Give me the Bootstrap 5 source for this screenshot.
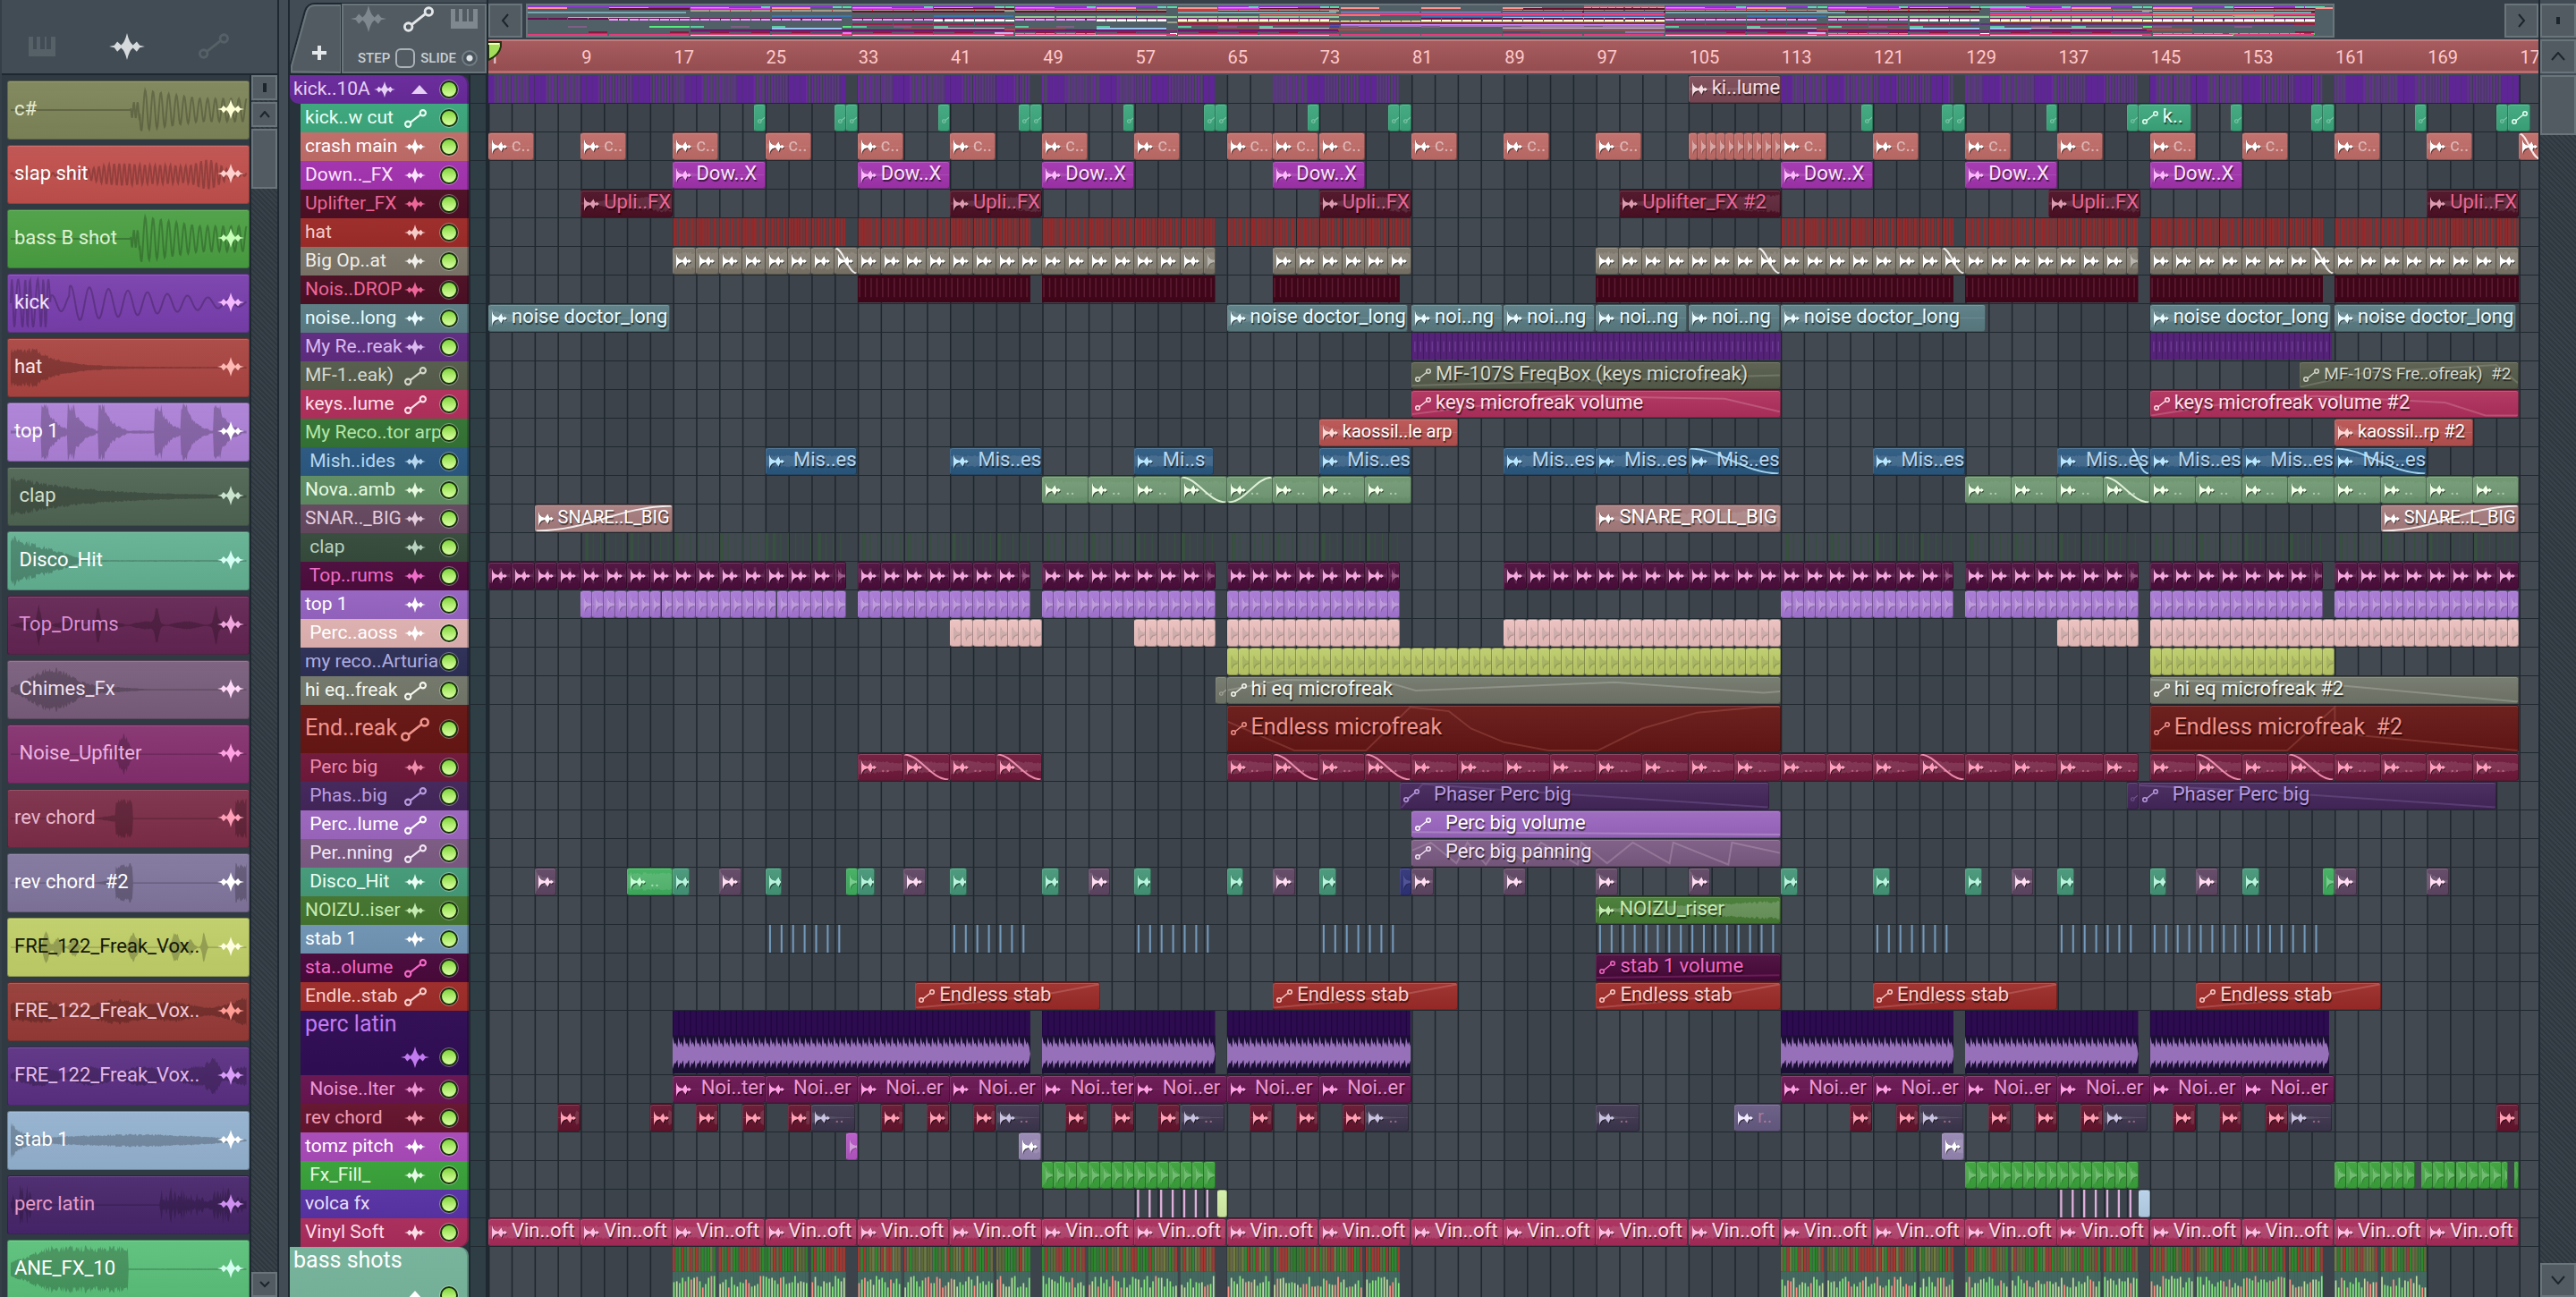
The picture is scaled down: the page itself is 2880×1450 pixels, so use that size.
<!DOCTYPE html>
<html lang="en">
<head>
<meta charset="utf-8">
<meta name="viewport" content="width=device-width, initial-scale=1">
<title>Playlist</title>
<link href="https://cdn.jsdelivr.net/npm/bootstrap@5.3.0/dist/css/bootstrap.min.css" rel="stylesheet">
<style>
  :root { --edge:#1d2830; --slate:#424c54; --panel:#525b62; --rim:#69747b; --well:#2f3a43; }
  body { background:var(--slate); font-family:Roboto,"Open Sans",sans-serif; font-size:22px; line-height:30px; color:#fff; }
  button { font:inherit; color:inherit; background:none; border:0; padding:0; }
  svg { display:block; flex:none; }
  .hatch { background:repeating-linear-gradient(45deg,#30383f 0 2px,#384149 2px 4px); }
  .raised { background:var(--panel); border:2px solid var(--rim); color:#1c252c; }
  .cap-s { height:28px; }
  .cap-m { height:38px; }
  .thumb { height:67px; }

  /* picker */
  .picker { width:312px; border-left:2px solid #353f47; border-right:2px solid var(--edge); }
  .picker-tabs { height:84px; padding:22px 54px 0 30px; border-bottom:2px solid var(--edge); }
  .picker-list { width:279px; background:var(--well); padding:6px 0 0 6px; gap:6px; border-right:2px solid var(--edge); }
  .picker-item { height:66px; flex:none; border-radius:3px; padding:0 5px 2px 7px; border:1px solid rgba(0,0,0,.25); box-shadow:inset 0 1px rgba(255,255,255,.14); background-image:linear-gradient(rgba(255,255,255,.05),rgba(0,0,0,.04)); white-space:pre; overflow:hidden; text-align:left; }
  .picker-item .wv { left:3px; right:3px; top:1px; bottom:1px; }
  .vbar { gap:2px; }
  .vbar.slim { width:29px; }
  .vbar.wide { width:42px; border-left:2px solid var(--edge); }
  .wv { position:absolute; overflow:visible; }

  /* top strip */
  .gap-col { width:10px; }
  .playlist { border-left:2px solid var(--edge); }
  .top-strip { height:84px; }
  .corner { width:222px; border-right:2px solid var(--edge); border-bottom:2px solid var(--edge); }
  .add-tab { width:58px; height:82px; }
  .tool-box { width:162px; margin-top:4px; border:2px solid var(--rim); outline:1px solid var(--edge); background:var(--panel); }
  .tool-box label { font-size:15px; font-weight:500; line-height:20px; color:#c9d0d4; }
  .tool-box input { appearance:none; margin:0; border:2px solid #aab2b7; width:22px; height:22px; border-radius:6px; }
  .tool-box input[type=radio] { width:18px; height:18px; border-radius:50%; border-color:#737d84; background:radial-gradient(#dfe4e6 0 3px,#4a545c 4px); }
  .overview-row { height:44px; background:#363f47; padding:4px 0 2px; }
  .nav-btn { width:38px; }
  .overview { width:91.4%; background:#516067; border:2px solid var(--rim); }
  .ruler { height:38px; background:linear-gradient(#a75c5e,#944d50); border-top:2px solid #c27b7d; border-bottom:3px solid #b96d70; }
  .ruler span { position:absolute; top:3px; padding-left:1px; font-size:20px; color:#ffc9ca; }
  .ruler svg { position:absolute; left:0; top:0; z-index:2; }

  /* tracks */
  .heads { width:200px; padding-left:12px; background:#27323a; }
  .head { height:32px; padding:0 12px 0 5px; font-size:21px; white-space:pre; box-shadow:inset -2px 0 rgba(0,0,0,.2); background-image:linear-gradient(rgba(255,255,255,.02),rgba(0,0,0,.03)); }
  .head.grp { margin-left:-12px; padding-left:4px; border-radius:0 10px 0 0; }
  .head.grp:first-child { border-bottom-left-radius:10px; }
  .head.last { border-radius:0 0 10px 0; }
  .head.tall { height:54px; font-size:25px; }
  .head.lofty { height:72px; font-size:25px; }
  .head span { min-width:0; padding-bottom:3px; }
  .head .ico { width:34px; margin-right:11px; flex:none; }
  .head .w0 { margin-right:18px; }
  .head .t0 { margin-right:14px; }
  .led { appearance:none; width:20px; height:20px; margin:0; border-radius:50%; border:2px solid #16300c; outline:1px solid rgba(255,255,255,.35); background:linear-gradient(#7fd33c,#b9f07a 60%,#d9ffa4); flex:none; }
  .gutter { width:22px; border-left:2px solid #1d2830; border-right:3px solid #1d2830; background:#2f3d45; }
  .gutter div, .lane { height:32px; border-bottom:1px solid #20282f; }
  .gutter .tall, .lane.tall { height:54px; }
  .gutter .lofty, .lane.lofty { height:72px; }
  .lanes { background:#424951; overflow:hidden; }
  .grid-lines { position:absolute; left:0; top:0; width:100%; height:100%; }
  .lane { position:relative; }
  .clip { position:absolute; top:0; bottom:0; display:flex; align-items:center; border-radius:3px; overflow:hidden; white-space:pre; padding-left:3px; border:1px solid rgba(0,0,0,.28); border-left-color:rgba(255,255,255,.08); box-shadow:inset 0 1px rgba(255,255,255,.16); background-image:linear-gradient(rgba(255,255,255,.05),rgba(0,0,0,.06)); text-shadow:1px 2px 1px rgba(0,0,0,.6); }
  .clip > svg, .clip > span { position:relative; }
  .clip > .wv { position:absolute; left:0; top:0; width:100%; height:100%; }
  .clip span { padding:0 0 3px 5px; }
  .clip .dim { opacity:.5; text-shadow:none; font-size:20px; }
  .clip .snug { font-size:20px; }
  .clip .snugger { font-size:19px; }
  .clip .faint { opacity:.4; }
  .tall .clip { font-size:25px; }
  .strip { position:absolute; top:0; height:100%; overflow:hidden; }
</style>
</head>
<body class="vh-100 d-flex overflow-hidden">

<aside class="picker d-flex flex-column flex-shrink-0">
  <div class="picker-tabs d-flex justify-content-between" id="pickerTabs"></div>
  <div class="d-flex flex-grow-1 overflow-hidden">
    <div class="picker-list d-flex flex-column overflow-hidden" id="picker"></div>
    <div class="vbar slim d-flex flex-column hatch">
      <button class="raised cap-s d-flex justify-content-center align-items-center" aria-label="Pin"><svg width="4" height="10"><rect width="4" height="10" fill="#1c252c"/></svg></button>
      <button class="raised cap-s d-flex justify-content-center align-items-center" aria-label="Up"><svg width="12" height="8"><path d="M1 7 6 1 11 7" fill="none" stroke="#1c252c" stroke-width="2"/></svg></button>
      <div class="raised thumb"></div>
      <button class="raised cap-s mt-auto d-flex justify-content-center align-items-center" aria-label="Down"><svg width="12" height="8"><path d="M1 1 6 6 11 1" fill="none" stroke="#1c252c" stroke-width="2"/></svg></button>
    </div>
  </div>
</aside>
<div class="gap-col flex-shrink-0"></div>

<main class="playlist d-flex flex-column flex-grow-1 overflow-hidden">
  <div class="top-strip d-flex flex-shrink-0">
    <div class="corner d-flex flex-shrink-0">
      <button class="add-tab" aria-label="Add track">
        <svg width="58" height="82"><path d="M0 84 L0 74 L17 12 Q20 4 28 4 L58 4 L58 84Z" fill="#525b62" stroke="#1d2830" stroke-width="2"/><path d="M2 80 L2 74 L19 13 Q21 6 28 6 L57 6 L57 81Z" fill="none" stroke="#69747b" stroke-width="2"/><path d="M25 59 H41 M33 51 V67" stroke="#e3e7e9" stroke-width="4"/></svg>
      </button>
      <div class="tool-box d-flex flex-column justify-content-between px-2 pb-1">
        <div class="d-flex justify-content-between align-items-center" id="toolIcons"></div>
        <div class="d-flex align-items-center justify-content-between ps-2">
          <label for="step">STEP</label><input type="checkbox" id="step">
          <label for="slide">SLIDE</label><input type="radio" id="slide" checked>
        </div>
      </div>
    </div>
    <div class="flex-grow-1 d-flex flex-column">
      <div class="overview-row d-flex">
        <button class="nav-btn raised d-flex justify-content-center align-items-center" aria-label="Back"><svg width="10" height="16"><path d="M8 1 2 8 8 15" fill="none" stroke="#1c252c" stroke-width="2"/></svg></button>
        <div class="flex-grow-1 ps-1"><div class="overview h-100"><svg id="overview" width="100%" height="100%" shape-rendering="crispEdges"></svg></div></div>
        <button class="nav-btn raised d-flex justify-content-center align-items-center" aria-label="Forward"><svg width="10" height="16"><path d="M2 1 8 8 2 15" fill="none" stroke="#1c252c" stroke-width="2"/></svg></button>
      </div>
      <div class="ruler position-relative overflow-hidden" id="ruler">
        <svg width="16" height="22"><path d="M0 1 H14 V6 Q12 16 0 21Z" fill="#a4dc5c" stroke="#24330f" stroke-width="2"/><path d="M0 3 H12" stroke="#f4ffb0" stroke-width="2"/></svg>
      </div>
    </div>
    <div class="vbar wide d-flex flex-column pt-1">
      <button class="raised cap-m d-flex justify-content-center align-items-center" aria-label="Pin"><svg width="4" height="8"><rect width="4" height="8" fill="#1c252c"/></svg></button>
      <button class="raised cap-m d-flex justify-content-center align-items-center" aria-label="Up"><svg width="16" height="10"><path d="M1 9 8 1 15 9" fill="none" stroke="#1c252c" stroke-width="2"/></svg></button>
    </div>
  </div>
  <div class="d-flex flex-grow-1 overflow-hidden">
    <div class="heads flex-shrink-0" id="heads"></div>
    <div class="gutter flex-shrink-0" id="gutter"></div>
    <div class="lanes position-relative flex-grow-1" id="lanes"></div>
    <div class="vbar wide d-flex flex-column flex-shrink-0 hatch">
      <div class="raised thumb"></div>
      <button class="raised cap-m mt-auto d-flex justify-content-center align-items-center" aria-label="Down"><svg width="16" height="10"><path d="M1 1 8 9 15 1" fill="none" stroke="#1c252c" stroke-width="2"/></svg></button>
    </div>
  </div>
</main>

<script src="https://cdn.jsdelivr.net/npm/bootstrap@5.3.0/dist/js/bootstrap.bundle.min.js"></script>
<script>
const BARS = 177.67;                       // bars visible across the lanes
const pct = n => (n / BARS * 100).toFixed(4) + '%';
let seed = 7;
const rnd = () => (seed = (seed * 16807) % 2147483647) / 2147483647;

/* icons */
const WAVE = 'M0 8 3.5 7.3 5.5 5 8 7.2Q10.6 5.5 12 0Q13.4 5.5 16 7.2L18.5 5 20.5 7.3 24 8 20.5 8.7 18.5 11 16 8.8Q13.4 10.5 12 16Q10.6 10.5 8 8.8L5.5 11 3.5 8.7Z';
const wave = (w, c) => `<svg width="${w}" height="${Math.round(w * .74)}" viewBox="0 0 24 16" preserveAspectRatio="none"><path fill="${c}" d="${WAVE}"/></svg>`;
const link = (w, c) => `<svg width="${w}" height="${Math.round(w * .84)}" viewBox="0 0 24 20" fill="none" stroke="${c}" stroke-width="2"><circle cx="4" cy="16" r="3"/><circle cx="20" cy="4" r="3"/><path d="M7 14 17 6"/></svg>`;
const keys = (w, c) => `<svg width="${w}" height="22" viewBox="0 0 30 22"><path fill="${c}" d="M0 0H5V14H9V0H10V0H13V14H18V0H20V14H25V0H30V22H0Z"/></svg>`;
const burst = (c, cls) => `<svg class="${cls}" width="17" height="18" viewBox="0 0 17 18"><path fill="rgba(0,0,0,.5)" transform="translate(1 1)" d="M0 1Q2 7 5 7.2L7 8 10.5 3.5 12.5 8 14.5 7 17 9 14.5 11 12.5 10 10.5 14.5 7 10 5 10.8Q2 11 0 17Z"/><path fill="${c}" d="M0 1Q2 7 5 7.2L7 8 10.5 3.5 12.5 8 14.5 7 17 9 14.5 11 12.5 10 10.5 14.5 7 10 5 10.8Q2 11 0 17Z"/></svg>`;

/* waveform shapes: f(t) gives the half height, 0..1 */
function solid(f, n, fill) {
  let up = '', dn = '';
  for (let i = 0; i <= n; i++) {
    const a = Math.max(.02, f(i / n) * (.7 + .3 * rnd()));
    up += `L${i} ${(50 - a * 48).toFixed(1)}`; dn = `L${i} ${(50 + a * 48).toFixed(1)}` + dn;
  }
  return `<svg class="wv" width="98%" height="97%" viewBox="0 0 ${n} 100" preserveAspectRatio="none"><path fill="${fill}" d="M0 50${up}${dn}Z"/></svg>`;
}
function osc(f, n, stroke) {
  let d = 'M0 50';
  for (let i = 1; i <= n; i++) d += `L${i} ${(50 - f(i / n) * 48).toFixed(1)}`;
  return `<svg class="wv" width="98%" height="97%" viewBox="0 0 ${n} 100" preserveAspectRatio="none"><path fill="none" stroke="${stroke}" stroke-width="2" vector-effect="non-scaling-stroke" d="${d}"/></svg>`;
}
const D = 'rgba(0,0,0,.22)', near = (t, c, w) => Math.exp(-Math.pow((t - c) / w, 2));
const late = t => t < .51 ? 0 : t < .55 ? .3 * Math.sin(t * 400) : (.78 - .35 * Math.min(1, (t - .55) * 4)) * Math.sin(t * 190);
const thump = t => t < .17 ? .9 * Math.sin(t * 240 + Math.sin(t * 90)) : (t < .25 ? .3 : .85 - t * .75) * Math.sin(t * 82 - t * t * 6);
const saw = t => { let v = .06; for (const c of [.13, .24, .37, .61, .72, .86]) { const q = t - c; if (q > 0 && q < .12) v = Math.max(v, q < .03 ? 1.3 : .85 * Math.exp(-(q - .03) * 22)); } return Math.min(v, 1.1); };
const chord = t => near(t, .48, .035) > .35 || t > .95 ? .75 : t > .35 && t < .46 ? (t - .35) * 1.6 : .02;

const samples = [
  ['c#', '#7d8457', '#e4ead2', '#ffffd6', osc(late, 400, D)],
  ['slap shit', '#bf4f4c', '#fff', '#ffd0cc', osc(t => (.06 + .34 * near(t, .46, .14) + .25 * near(t, .68, .12) + .45 * near(t, .84, .07)) * Math.sin(t * 290), 400, D)],
  ['bass B shot', '#499e41', '#dcf3d2', '#c6ffb8', osc(t => late(t) * 1.1, 400, D)],
  ['kick', '#783eac', '#f3e4ff', '#f4b8ff', osc(thump, 400, D)],
  ['hat', '#a94441', '#ffe3e1', '#ffb9b4', solid(t => t < .1 ? .75 : .75 * Math.exp(-(t - .1) * 9) + .03, 260, D)],
  ['top 1', '#ac80d6', '#fff', '#fff', solid(saw, 260, D)],
  [' clap', '#4f6453', '#cfdfc9', '#c9e3cf', solid(t => .8 * Math.exp(-t * 3.2) + .03, 260, D)],
  [' Disco_Hit', '#62b091', '#fff', '#d5fff4', solid(t => t < .3 ? 1 - t * 3 : .03, 260, D)],
  [' Top_Drums', '#622451', '#dc8fd4', '#f0a6dc', solid(t => .16 * Math.abs(Math.sin(t * 19)) + .7 * (near(t, .12, .01) + near(t, .37, .01) + near(t, .62, .01) + near(t, .87, .01)), 260, D)],
  [' Chimes_Fx', '#785d7b', '#f1e0ee', '#ffd9f8', solid(t => .85 * near(t, .17, .12) + .12 * near(t, .4, .15), 260, D)],
  [' Noise_Upfilter', '#842f6e', '#f0b2df', '#ffa2e4', solid(t => near(t, .48, .03) * .8 + .02, 260, D)],
  ['rev chord', '#7c2d48', '#eab7cb', '#ff9fb8', solid(chord, 260, D)],
  ['rev chord  #2', '#80749b', '#fff', '#fff', solid(chord, 260, D)],
  ['FRE_122_Freak_Vox..', '#bfce67', '#15180a', '#fffde0', solid(t => .65 * (near(t, .15, .015) + near(t, .2, .02) * .6 + near(t, .27, .02) * .6 + near(t, .52, .02) + near(t, .7, .02) + near(t, .76, .02) * .5 + near(t, .82, .01)), 260, D)],
  ['FRE_122_Freak_Vox..', '#953a36', '#f3c7d3', '#ff9c94', solid(t => .35 + .2 * Math.sin(t * 17) * Math.sin(t * 5), 260, D)],
  ['FRE_122_Freak_Vox..', '#5a2f82', '#e2b7ea', '#d99cf7', solid(t => .3 * Math.abs(Math.sin(t * 14)) + .1 + .5 * near(t, .86, .03), 260, D)],
  ['stab 1', '#92b0ce', '#fff', '#fff', solid(t => .75 * Math.exp(-t * 18) + .25 * Math.sin(t * 3), 260, D)],
  ['perc latin', '#47256a', '#e79cc8', '#cf8ff0', solid(t => (t < .1 || t > .63) ? .15 + .8 * Math.pow(rnd(), 3) : .02, 200, D)],
  ['ANE_FX_10', '#5abf79', '#fff', '#d4fff0', solid(t => t < .5 ? .3 + .6 * Math.min(1, t * 6) : .03, 260, D)],
];
document.getElementById('pickerTabs').innerHTML =
  `<button aria-label="Patterns">${keys(30, '#566067')}</button><button aria-label="Audio">${wave(40, '#d6dadd')}</button><button aria-label="Automation">${link(34, '#566067')}</button>`;
document.querySelectorAll('#pickerTabs button').forEach(b => b.className = 'd-flex align-items-center h-100');
document.getElementById('toolIcons').innerHTML =
  `<button aria-label="Audio clips">${wave(40, '#7f888e')}</button><button aria-label="Automation clips">${link(34, '#e3e7e9')}</button><button aria-label="Pattern clips">${keys(30, '#7f888e')}</button>`;
document.getElementById('picker').innerHTML = samples.map(([n, c, t, i, w]) =>
  `<button class="picker-item position-relative d-flex align-items-center justify-content-between" style="background-color:${c};color:${t}">${w}<span class="position-relative">${n}</span>${wave(30, i).replace('<svg', '<svg class="position-relative"')}</button>`).join('');

/* clips */
const clip = (a, b, l = '', o = {}) => ({ a, b, l, k: 'w', ...o });
const auto = (a, b, l, pts, o = {}) => clip(a, b, l, { k: 'a', pts, ...o });
const run = (segs, step, o = {}) => segs.flatMap(([a, b]) => {
  const r = []; for (let x = a; x < b - .01; x += step) {
    const e = Math.min(b, x + step);
    r.push(clip(x, e, e - x >= 3 ? o.l || '' : '', { ...o, k: e - x < 1.5 ? 'g' : 'w', f: o.fade && o.fade.includes(x) ? 'out' : o.fadeIn && o.fadeIn.includes(x) ? 'in' : '' }));
  } return r;
});
const at = (list, len, l, o) => list.map(a => clip(a, a + len, l, o));
const strip = (segs, kind) => segs.map(([a, b]) => ({ a, b, s: kind }));
const MAIN = [[17, 32], [33, 48], [49, 64]], TAIL = [[129, 144], [145, 160], [161, 177]];
const hiss = t => .8 * Math.exp(-t * 9) + .04, buzz = () => .75, grow = t => .1 + t * .7;

const P = { c: '#5f4663', i: '#ffdcf2' }, T = { c: '#459678', i: '#b6f2dc' }, G = { c: '#3fae5e', i: '#c6ffd4' };
const red = a => clip(a, a + 1.95, '', { i: '#ff9fb4', wf: t => t > .8 ? .6 : .04 });
const gry = (a, o) => clip(a, a + 3.8, '..', { c: '#3d364e', i: '#c9c2e0', dim: 1, wf: t => .5 * Math.exp(-t * 3), ...o });

const tracks = [
  ['kick..10A', '#682a9a', '#e6cff5', 'w', [...strip([[1, 32], [33, 48], [49, 64], [69, 80], [113, 128], ...TAIL], 'kick'), clip(105, 113, 'ki..lume', { c: '#7c4a57', t: '#f6dfe4', wf: () => .1 })]],
  ['kick..w cut', '#3ca67c', '#eafff5', 'a', [...[24, 31, 32, 40, 47, 48, 56, 63, 64, 72, 79, 80, 120, 127, 128, 136, 143, 152, 159, 160, 168, 175].map(a => clip(a, a + 1, '', { k: 'ga' })), auto(144, 148.6, 'k..'), auto(176, 178, '')]],
  ['crash main', '#bf6c68', '#fff', 'w', [...at([1, 9, 17, 25, 33, 41, 49, 57, 65, 69, 73, 81, 89, 97, 113, 121, 129, 137, 145, 153, 161, 169], 3.95, 'c..', { dim: 1, wf: t => .3 * Math.exp(-t * 4) }), ...run([[105, 113]], .8), clip(177, 178.9, '', { f: 'out' })]],
  ['Down.._FX', '#a233ae', '#fbe3ff', 'w', at([17, 33, 49, 69, 113, 129, 145], 8, 'Dow..X', { i: '#ffb6ff', wf: hiss })],
  ['Uplifter_FX', '#4c0f24', '#ed6698', 'w', [...at([9, 41, 73, 169], 8, 'Upli..FX', { i: '#dc9ab0', wf: grow }), clip(136.2, 144.2, 'Upli..FX', { i: '#dc9ab0', wf: grow }), clip(99, 113, 'Uplifter_FX #2', { i: '#dc9ab0', wf: grow })]],
  ['hat', '#9c2b28', '#f5cbc8', 'w', strip([...MAIN, [65, 80.9], [113, 128], ...TAIL], 'hat')],
  ['Big Op..at', '#7b7468', '#f0eee8', 'w', run([[17, 64], [69, 81], [97, 144], [145, 177]], 2, { i: '#fff', wf: buzz, fade: [31, 111, 127, 159] })],
  ['Nois..DROP', '#4c0f24', '#ed6698', 'w', strip([[33, 48], [49, 64], [69, 80], [97, 128], ...TAIL], 'noise')],
  ['noise..long', '#5a7c83', '#e8fbff', 'w', [...at([1, 65, 145, 161], 15.7, 'noise doctor_long', { wf: hiss }), ...at([81, 89, 97, 105], 7.9, 'noi..ng', { wf: hiss }), clip(113, 130.8, 'noise doctor_long', { wf: hiss })]],
  ['My Re..reak', '#5f2c80', '#d9b9ef', 'w', strip([[81, 113], [145, 160.8]], 'freak')],
  ['MF-1..eak)', '#565c4b', '#d5d8cc', 'a', [auto(81, 113, 'MF-107S FreqBox (keys microfreak)', [[0, .9], [1, .5]]), auto(158, 177, 'MF-107S Fre..ofreak)  #2', [[0, .95], [.3, .4], [.9, .1], [1, .8]], { sm: 2 })]],
  ['keys..lume', '#b0305c', '#ffe0ea', 'a', [auto(81, 113, 'keys microfreak volume', [[0, .9], [.4, .2], [.85, .3], [1, .8]]), auto(145, 177, 'keys microfreak volume #2', [[0, .95], [.2, .5], [.45, .2], [.8, .45], [.91, .95], [1, .95]])]],
  ['My Reco..tor arp', '#347334', '#b4e6a8', '', [clip(73, 85, 'kaossil..le arp', { c: '#b85250', t: '#fff', i: '#ffd6d2', wf: hiss, sm: 1 }), clip(161, 173, 'kaossil..rp #2', { c: '#b85250', t: '#fff', i: '#ffd6d2', wf: hiss, sm: 1 })]],
  [' Mish..ides', '#2b5880', '#b6d6ef', 'w', [...at([25, 41, 73, 89, 97, 121, 145, 153], 7.95, ' Mis..es', { i: '#b8e6ff', wf: () => .5 }), clip(57, 63.9, ' Mi..s', { i: '#b8e6ff', wf: () => .5 }), ...at([105, 161], 7.95, ' Mis..es', { i: '#b8e6ff', f: 'out', wf: t => .5 - t * .5 }), clip(137, 145, ' Mis..es', { i: '#b8e6ff', f: 'tail', wf: () => .5 })]],
  ['Nova..amb', '#5f8c63', '#e6fae0', 'w', run([[49, 81], [129, 177]], 4, { c: '#6b956e', l: '..', dim: 1, i: '#f2ffe9', wf: buzz, wa: .05, fade: [61, 141], fadeIn: [65] })],
  ['SNAR.._BIG', '#64485f', '#e3cbdc', 'w', [clip(5, 17, 'SNARE..L_BIG', { c: '#a67c7d', t: '#fff', f: 'in', sm: 1 }), clip(97, 113, 'SNARE_ROLL_BIG', { c: '#a67c7d', t: '#fff', wf: grow }), clip(165, 177, 'SNARE..L_BIG', { c: '#a67c7d', t: '#fff', f: 'in', sm: 1 })]],
  [' clap', '#364b3c', '#b9d2bf', 'w', strip([[9, 32], [33, 48], [49, 64], [65, 80], [113, 128], ...TAIL], 'clap')],
  [' Top..rums', '#4c0d3c', '#f06cc8', 'w', run([[1, 32], [33, 48], [49, 64], [65, 80], [89, 128], ...TAIL], 2, { i: '#f5a8dd', wf: t => t % .5 < .12 ? .7 : .15 })],
  ['top 1', '#9564c0', '#fff', 'w', run([[9, 32], [33, 48], [49, 64], [65, 80], [113, 128], ...TAIL], 1, { c: '#a676d4', i: '#d9c0e6', wf: saw })],
  [' Perc..aoss', '#ddb0ae', '#fff', 'w', run([[41, 49], [57, 64], [65, 80], [89, 113], [137, 144], [145, 177]], 1, { c: '#ecc0be', i: '#a89a98' })],
  ['my reco..Arturia', '#2d2f55', '#b0aee0', '', run([[65, 113], [145, 161]], 1, { c: '#bccb68', i: '#8f9a60' })],
  ['hi eq..freak', '#72776a', '#f6f8f0', 'a', [clip(64, 65, '', { k: 'ga' }), auto(65, 113, 'hi eq microfreak', [[0, .5], [.1, .1], [.28, .15], [.34, .52], [.7, .2], [.97, .6], [1, .55]]), auto(145, 177, 'hi eq microfreak #2', [[0, .1], [.5, .3], [1, .95]])]],
  ['End..reak', '#651614', '#f0948c', 'a', [auto(65, 113, 'Endless microfreak', [[0, .35], [.12, .98], [.25, .98], [.33, .03], [.4, .12], [.44, .5], [.5, .8], [.58, .98], [.67, .98], [.75, .5], [.85, .15], [.97, .02], [1, .02]]), auto(145, 177, 'Endless microfreak  #2', [[0, .98], [.37, .98], [.5, .03], [.5, .6], [1, .98]])], 'tall'],
  [' Perc big', '#70183a', '#f08cac', 'w', run([[33, 49], [65, 144], [145, 177]], 4, { l: '..', dim: 1, i: '#ff9fbe', wf: t => .65 - t * .3, fade: [37, 45, 69, 77, 125, 149, 157] })],
  [' Phas..big', '#43265a', '#b99be0', 'a', [auto(80, 112, '  Phaser Perc big', [[0, 1], [.06, .05], [.3, .3], [1, .95]]), clip(143, 144, '', { k: 'ga' }), auto(144, 175, '  Phaser Perc big', [[0, .1], [.3, .3], [1, .95]])]],
  [' Perc..lume', '#9b66be', '#fff', 'a', [auto(81, 113, '  Perc big volume', [[0, .8], [1, .9]])]],
  [' Per..nning', '#7b5a82', '#f3e6f5', 'a', [auto(81, 113, '  Perc big panning', [[0, .4], [.05, .1], [.12, .9], [.15, .1], [.2, .95], [.24, .1], [.31, .9], [.35, .1], [.45, .95], [.46, .1], [.53, .9], [.6, .1], [.7, .9], [.71, .1], [.86, .95], [.87, .1], [1, .5]])]],
  [' Disco_Hit', '#459a78', '#eafff6', 'w', [...at([5, 21, 37, 53, 69, 81, 89, 97, 105, 133, 149, 161, 169], 1.9, '', { ...P, wf: t => .9 * Math.exp(-t * 2) }), ...at([17, 25, 33, 41, 49, 57, 65, 73, 113, 121, 129, 137, 145, 153], 1.45, '', T), clip(13, 17, '..', { ...G, dim: 1, wf: buzz }), clip(32, 33, '', { ...G, k: 'g' }), clip(160, 161, '', { ...G, k: 'g' }), clip(80, 81, '', { c: '#2f3377', i: '#7f83c8', k: 'g' })]],
  ['NOIZU..iser', '#44742f', '#c4ebb0', 'w', [clip(97, 113, 'NOIZU_riser', { c: '#467a34', wf: grow, wa: .18 })]],
  ['stab 1', '#7093b3', '#fff', 'w', strip([[25, 32], [41, 48], [57, 64], [73, 80], [97, 113], [121, 128], [137, 144], [145, 160]], 'stab')],
  ['sta..olume', '#48093a', '#f569c6', 'a', [auto(97, 113, 'stab 1 volume', [[0, .9], [1, .8]])]],
  ['Endle..stab', '#9c2b28', '#f9cfcb', 'a', [38, 69, 97, 121, 149].map(a => auto(a, a + 16, 'Endless stab', [[0, .95], [.4, .7], [.7, .45], [1, .05]]))],
  ['perc latin', '#300d54', '#c27af0', 'w', strip([[17, 48], [49, 64], [65, 80.9], [113, 128], [129, 144], [145, 160.5]], 'latin'), 'lofty'],
  [' Noise..lter', '#681450', '#ef96d4', 'w', [...at([17, 49], 8, ' Noi..ter', { i: '#ff9fe4', wf: t => .5 * near(t, .48, .03) }), ...at([25, 33, 41, 57, 65, 73, 113, 121, 129, 137, 145, 153], 8, ' Noi..er', { i: '#ff9fe4', wf: t => .5 * near(t, .48, .03) })]],
  ['rev chord', '#64142e', '#f29ab2', 'w', [...[7, 15, 19, 23, 27, 35, 39, 43, 51, 55, 59, 67, 71, 75, 119, 123, 131, 135, 139, 147, 151, 155, 175].map(red), ...[29, 45, 61, 77, 97, 125, 141, 157].map(a => gry(a)), clip(109, 113, 'r..', { c: '#665a82', i: '#f2eaff', dim: 1 })]],
  ['tomz pitch', '#a84ab8', '#fff', 'w', [clip(32, 33, '', { k: 'g', c: '#b657c6' }), ...at([47, 127], 1.9, '', { c: '#9686b2', i: '#fff', wf: t => t > .5 ? .6 : .02 })]],
  [' Fx_Fill_', '#39a139', '#e5fae5', 'w', run([[49, 64], [129, 144], [161, 168], [168.5, 176], [176.6, 177]], 1, { i: '#9fdca0', wf: t => 1 - t })],
  ['volca fx', '#5733a3', '#e8defa', '', [...strip([[57, 64], [137, 144]], 'volca'), clip(64.2, 65, '', { k: 'n', c: '#d3efa6' }), clip(144, 145, '', { k: 'n', c: '#b6d0e8' })]],
  ['Vinyl Soft', '#a92c5a', '#fbdde6', 'w', at(Array.from({ length: 22 }, (_, i) => 1 + i * 8), 7.95, 'Vin..oft', { i: '#ffbbe0', wf: () => .55 })],
  ['bass shots', '#76b39b', '#fff', '', strip([[17, 32], [33, 48], [49, 64], [65, 80], [113, 128], [129, 144], [145, 160], [161, 169]], 'bass'), 'lofty'],
];

/* dense runs of very short clips, one unit per bar */
function stripSvg(o) {
  const w = o.b - o.a, H = o.s === 'latin' || o.s === 'bass' ? 72 : 32; let g = '';
  const r = (x, wd, c, y = 0, h = H) => g += `<rect x="${x.toFixed(3)}" y="${y}" width="${wd.toFixed(3)}" height="${h}" fill="${c}"/>`;
  if (o.s === 'kick') { for (let x = 0; x < w; x += .5) { const full = Math.floor((o.a + x) * 2) % 9 < 3; if (full) r(x, .46, '#5f2596'); else { r(x, .16, '#6a2a9c'); r(x + .25, .16, '#5b3a80'); } } }
  if (o.s === 'hat') for (let x = .05; x < w; x += .5) { r(x, .22, '#98292a'); r(x + .28, .14, x % 2 < 1 ? '#98292a' : '#70383a'); }
  if (o.s === 'noise') { r(0, w, '#3f0518', 0, 31); for (let x = 0; x < w; x += .5) r(x + .1, .12, '#5c1d33', 3, 22); }
  if (o.s === 'freak') { r(0, w, '#552478', 0, 31); for (let x = 0; x < w; x += .5) { r(x, .07, '#3f175e', 0, 31); r(x + .25, .1, '#6f3d95', 10, 12); } }
  if (o.s === 'clap') for (let x = .4; x < w; x += .65) r(x, x % 4 < .7 ? .3 : .1, '#37503f');
  if (o.s === 'stab') for (let x = .3; x < w; x++) r(x, .16, '#7499ba');
  if (o.s === 'volca') for (let x = .25; x < w; x++) r(x, .18, '#dfb0dc');
  if (o.s === 'latin') {
    r(0, w, '#2c0b4e', 0, 71); r(0, w, '#1c0f35', 28, 43);
    for (let x = 0; x < w; x += .5) r(x, .08, '#200740', 0, 28);
    let u = 'M0 49', d = '';
    for (let x = 0; x < w; x += .25) {
      const t = x % 1, a = t < .2 ? 20 : t < .5 ? 13 : t < .75 ? 19 : 14;
      u += `L${x} ${49 - a}L${x + .16} ${49 - a * .55}`; d = `L${x + .16} ${49 + a * .5}L${x} ${49 + a * .85}` + d;
    }
    g += `<path fill="#9670b8" d="${u}L${w} 49${d}Z"/>`;
  }
  if (o.s === 'bass') {
    const col = ['#6e7a40', '#a63832', '#2b8a2b', '#5d6a38', '#2f7d2c', '#a63832', '#2b8a2b', '#6e6a3c'], lit = ['#c4dca0', '#ff8f84', '#86e67c', '#86e67c'];
    for (let x = 0; x < w - .01; x += .25) {
      if (x % 8 > 3.6 && x % 8 < 4) continue;
      r(x, .2, col[Math.floor(rnd() * 8)], 0, 28); r(x, .26, '#44685f', 28, 44);
      const y = 33 + Math.floor(rnd() * 14); r(x + .05, .13, lit[Math.floor(rnd() * 4)], y, 72 - y);
    }
  }
  return `<svg class="strip" style="left:${pct(o.a - 1)};width:${pct(w)}" viewBox="0 0 ${w} ${H}" preserveAspectRatio="none">${g}</svg>`;
}
const FADE = { out: 'M0 2C35 2 60 98 100 98', in: 'M0 98C40 98 60 4 100 2', tail: 'M82 0C88 20 90 98 100 98' };
function clipHtml(o, bg, fg) {
  if (o.s) return stripSvg(o);
  const t = o.t || fg, i = o.i || t; let x = '';
  if (o.wf) x += solid(o.wf, Math.max(20, Math.round((o.b - o.a) * 10)), `rgba(255,255,255,${o.wa || .11})`);
  if (o.pts) x += `<svg class="wv" viewBox="0 0 100 100" preserveAspectRatio="none"><polyline fill="none" stroke="${t}" stroke-opacity=".2" stroke-width="2" vector-effect="non-scaling-stroke" points="${o.pts.map(p => (p[0] * 100) + ',' + (p[1] * 100)).join(' ')}"/></svg>`;
  if (o.k === 'w') x += burst(i, ''); if (o.k === 'g') x += burst(i, 'faint');
  if (o.k === 'a') x += link(18, t); if (o.k === 'ga') x += link(14, t).replace('<svg', '<svg class="faint"');
  if (o.l) x += `<span class="${o.dim ? 'dim' : ['', 'snug', 'snugger'][o.sm || 0]}">${o.l}</span>`;
  if (o.f) x += `<svg class="wv" viewBox="0 0 100 100" preserveAspectRatio="none"><path fill="none" stroke="${i}" stroke-opacity=".85" stroke-width="2" vector-effect="non-scaling-stroke" d="${FADE[o.f]}"/></svg>`;
  return `<div class="clip" style="left:${pct(o.a - 1)};width:${pct(o.b - o.a)};background-color:${o.c || bg};color:${t}">${x}</div>`;
}

let heads = '', gut = '', lanes = '', over = '';
tracks.forEach(([n, bg, fg, ic, clips, size = ''], k) => {
  const grp = k === 0 || k === 39, big = size !== '';
  const icon = ic === 'w' ? wave(size === 'lofty' ? 32 : 24, fg) : ic === 'a' ? link(big ? 32 : 25, fg) : '';
  const tri = `<svg width="18" height="10"><path fill="${fg}" d="M9 0 18 10H0Z"/></svg>`;
  const led = `<input class="led" type="checkbox" checked aria-label="Mute ${n.trim()}">`;
  let inner;
  if (size === 'lofty') inner = `<div class="d-flex flex-column h-100 justify-content-between"><span>${n}</span><div class="d-flex align-items-center justify-content-end pb-2"><div class="ico d-flex justify-content-center">${k === 39 ? tri : icon}</div>${led}</div></div>`;
  else inner = `<div class="d-flex align-items-center h-100"><span class="flex-grow-1">${n}</span>${k === 0 ? `<div class="w0">${icon}</div><div class="t0">${tri}</div>` : icon ? `<div class="ico d-flex justify-content-center">${icon}</div>` : ''}${led}</div>`;
  heads += `<div class="head ${size} ${grp ? 'grp' : ''} ${k === 38 ? 'last' : ''}" style="background-color:${bg};color:${fg}">${inner}</div>`;
  gut += `<div class="${size}"></div>`;
  lanes += `<div class="lane ${size}">${clips.map(c => clipHtml(c, bg, fg)).join('')}</div>`;
  clips.forEach(c => over += `<rect x="${pct(c.a - 1)}" y="${k / 40 * 100}%" width="${pct(c.b - c.a - .1)}" height="2" fill="${c.c || bg}" style="filter:brightness(1.35)"/>`);
});
document.getElementById('heads').innerHTML = heads;
document.getElementById('gutter').innerHTML = gut;
let lines = '';
for (let b = 0; b < BARS; b += 2) if (b % 16 >= 8) lines += `<rect x="${pct(b)}" width="${pct(2)}" height="100%" fill="#3c434b"/>`;
for (let b = 0; b < BARS; b += 2) lines += `<rect x="${pct(b)}" width="1.5" height="100%" fill="#1f262d"/>`;
document.getElementById('lanes').innerHTML = `<svg class="grid-lines">${lines}</svg>` + lanes;
document.getElementById('overview').innerHTML = over;
let nums = '';
for (let b = 1; b < BARS; b += 8) nums += `<span style="left:${pct(b - 1)}">${b}</span>`;
document.getElementById('ruler').insertAdjacentHTML('beforeend', nums);
</script>
</body>
</html>
